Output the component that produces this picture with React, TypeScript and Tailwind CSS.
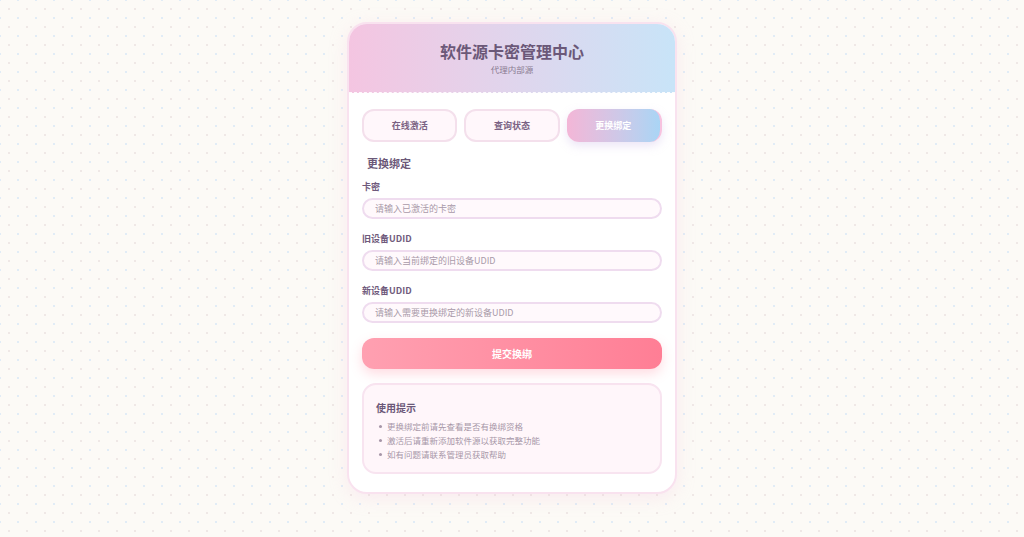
import { useState } from 'react'

const tabs = ['在线激活', '查询状态', '更换绑定']

const fields = [
  { label: '卡密', placeholder: '请输入已激活的卡密' },
  { label: '旧设备UDID', placeholder: '请输入当前绑定的旧设备UDID' },
  { label: '新设备UDID', placeholder: '请输入需要更换绑定的新设备UDID' },
]

const tips = ['更换绑定前请先查看是否有换绑资格', '激活后请重新添加软件源以获取完整功能', '如有问题请联系管理员获取帮助']

export default function App() {
  const [active, setActive] = useState(2)

  return (
    <div className="min-h-screen w-full bg-[#fcfaf6] bg-[image:radial-gradient(circle,#efe8e6_1px,transparent_1.5px),radial-gradient(circle,#e1ecf6_1px,transparent_1.5px)] bg-[length:18px_18px] bg-[position:0_0,9px_9px] flex justify-center pt-[22px] pb-[44px] font-['Noto_Sans_CJK_SC','Noto_Sans',sans-serif]">
      <div className="w-[330px] bg-white rounded-[20px] border-2 border-[#f9e2ef] shadow-[0_4px_18px_rgba(244,190,220,0.25)] overflow-hidden">
        {/* Header */}
        <div className="h-[69px] bg-gradient-to-r from-[#f4c5e1] to-[#c8e4f8] border-b-[1.5px] border-dashed border-white/90 flex flex-col items-center justify-center">
          <h1 className="text-[16px] leading-[20px] font-bold text-[#6b5878] -mt-[1px]">软件源卡密管理中心</h1>
          <p className="text-[8.5px] leading-[12px] text-[#8a7b92] mt-[2px]">代理内部源</p>
        </div>

        {/* Content */}
        <div className="px-[13px] pt-[16px] pb-[18px]">
          <div className="grid grid-cols-3 gap-[7px]">
            {tabs.map((t, i) => (
              <button
                key={t}
                onClick={() => setActive(i)}
                className={
                  i === active
                    ? 'h-[33px] rounded-[12px] bg-gradient-to-r from-[#f3b6d7] to-[#a9d5f5] border-r-2 border-[#f7c2df] text-white text-[9px] font-bold shadow-[0_4px_10px_rgba(200,180,230,0.35)]'
                    : 'h-[33px] rounded-[12px] bg-[#fff7fb] border-2 border-[#f4e0ec] text-[#7a6283] text-[9px] font-bold'
                }
              >
                {t}
              </button>
            ))}
          </div>

          <h2 className="mt-[14px] pl-[5px] text-[11px] leading-[14px] font-bold text-[#6b5878]">更换绑定</h2>

          <div className="mt-[11px] flex flex-col gap-[14px]">
            {fields.map((f) => (
              <div key={f.label}>
                <label className="block text-[9px] leading-[12px] font-bold text-[#6f5a7c]">{f.label}</label>
                <input
                  placeholder={f.placeholder}
                  className="mt-[5px] w-full h-[21px] rounded-full border-2 border-[#efdcef] bg-[#fff9fc] px-[11px] text-[9px] text-[#6b5878] placeholder:text-[#a99aa9] outline-none"
                />
              </div>
            ))}
          </div>

          <button className="mt-[15px] w-full h-[31px] rounded-[12px] bg-gradient-to-r from-[#ffa0b1] to-[#ff7e95] text-white text-[10px] font-bold shadow-[0_5px_12px_rgba(255,140,160,0.3)]">
            提交换绑
          </button>

          <div className="mt-[14px] rounded-[14px] border-2 border-[#f8e4f0] bg-[#fff6fa] px-[12px] pt-[16px] pb-[11px]">
            <h3 className="text-[10px] leading-[14px] font-bold text-[#6b5878]">使用提示</h3>
            <ul className="mt-[4px] flex flex-col">
              {tips.map((tip) => (
                <li key={tip} className="flex items-center gap-[5px] pl-[3px] text-[8.5px] leading-[14px] text-[#a796a8]">
                  <span className="w-[3px] h-[3px] rounded-full bg-[#a796a8]" />
                  {tip}
                </li>
              ))}
            </ul>
          </div>
        </div>
      </div>
    </div>
  )
}
